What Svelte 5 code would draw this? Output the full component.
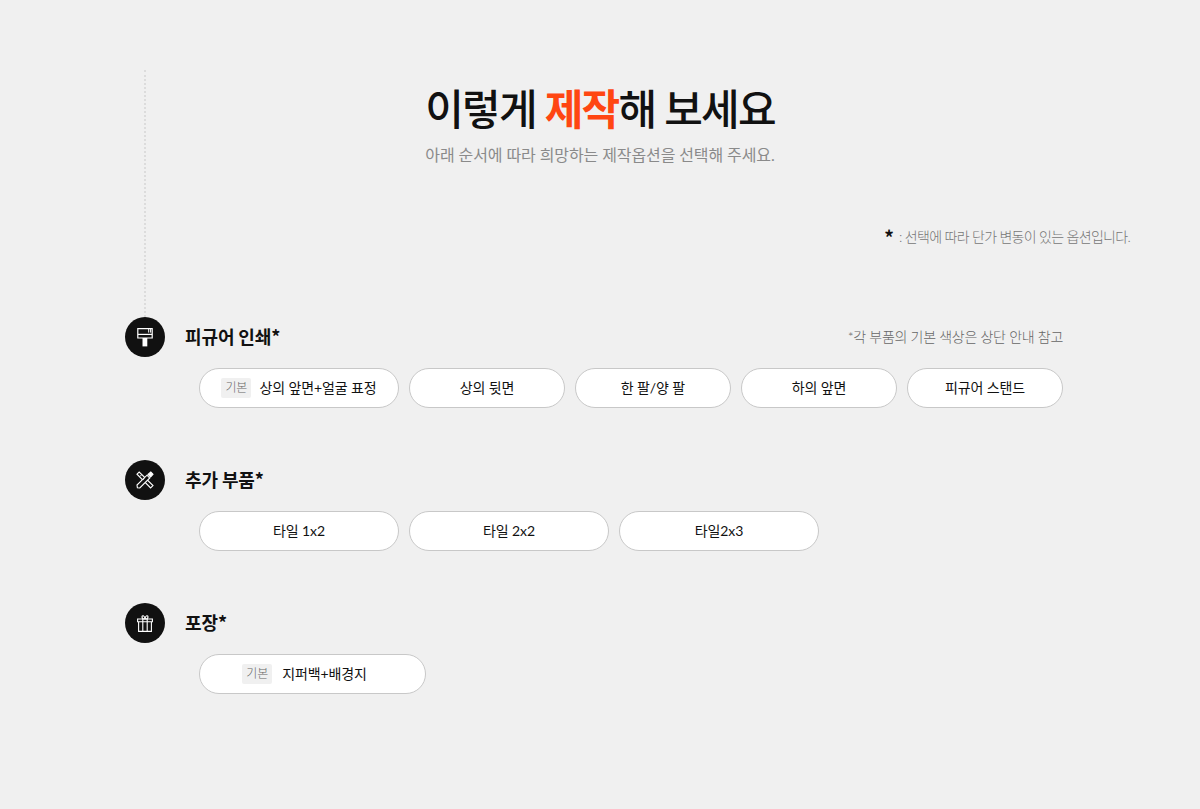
<script>
  const sections = [
    {
      title: "피규어 인쇄*",
      hint: "*각 부품의 기본 색상은 상단 안내 참고",
      icon: "brush",
      options: [
        { label: "상의 앞면+얼굴 표정", base: true, cls: "wide" },
        { label: "상의 뒷면" },
        { label: "한 팔/양 팔" },
        { label: "하의 앞면" },
        { label: "피규어 스탠드" },
      ],
    },
    {
      title: "추가 부품*",
      icon: "tools",
      options: [
        { label: "타일 1x2", cls: "wide" },
        { label: "타일 2x2", cls: "wide" },
        { label: "타일2x3", cls: "wide" },
      ],
    },
    {
      title: "포장*",
      icon: "gift",
      options: [{ label: "지퍼백+배경지", base: true, cls: "widest" }],
    },
  ];
</script>

<div class="page">
  <div class="guide"></div>

  <header class="head">
    <h1>이렇게 <em>제작</em>해 보세요</h1>
    <p class="sub">아래 순서에 따라 희망하는 제작옵션을 선택해 주세요.</p>
  </header>

  <p class="note"><span class="star">*</span><span class="note-text">: 선택에 따라 단가 변동이 있는 옵션입니다.</span></p>

  <div class="sections">
    {#each sections as s}
      <section>
        <div class="sec-head">
          <span class="badge">
            {#if s.icon === "brush"}
              <svg width="16" height="20" viewBox="0 0 16 20" fill="none" stroke="#fff" stroke-width="1.2">
                <path d="M.8 1.600h14.400v9.400H.8z" />
                <path d="M.8 7.400h14.400" />
                <path d="M11.700 2v3.600M13.600 2v3.600" stroke-width="1" />
                <path d="M5.500 11h4.800v8.400H5.500z" fill="#fff" stroke="none" />
              </svg>
            {:else if s.icon === "tools"}
              <svg width="18" height="18" viewBox="0 0 18 18" fill="none" stroke="#fff" stroke-width="1.100">
                <path d="M1 3.200L3.200 1l13.800 13.600-2.400 2.400z" />
                <path d="M1.400 16.800L1 14 11 4.200l2.800 2.800L3.800 17z" fill="#111" />
                <path d="M12 3.400L14.800 1 17 3.200l-2.400 2.800z" fill="#fff" />
                <path d="M3.800 5.600l1.600-1.600M7 8.800l1.200-1.200" stroke-width="1" />
              </svg>
            {:else}
              <svg width="16" height="18" viewBox="0 0 16 18" fill="none" stroke="#fff" stroke-width="1.100">
                <path d="M.6 5h14.800v2.800H.6zM1.600 7.800h12.800v9.600H1.600zM5.800 5v12.400M10.200 5v12.400" />
                <path d="M8 5C6.300 5 5 4.300 5 2.900 5 1.300 7.500.8 8 5zM8 5c1.700 0 3-.7 3-2.100C11 1.300 8.500.8 8 5z" />
              </svg>
            {/if}
          </span>
          <h2>{s.title}</h2>
          {#if s.hint}<span class="hint">{s.hint}</span>{/if}
        </div>
        <div class="options">
          {#each s.options as o}
            <button class={o.cls}>
              {#if o.base}<span class="tag">기본</span>{/if}
              <span class="label">{o.label}</span>
            </button>
          {/each}
        </div>
      </section>
    {/each}
  </div>
</div>

<style>
  :global(body) {
    background: #f0f0f0;
  }

  .page {
    position: relative;
    height: 809px;
    box-sizing: border-box;
    padding-top: 81px;
    overflow: hidden;
    font-family: Lato, "Noto Sans CJK KR", "Noto Sans", sans-serif;
    color: #111;
  }

  .guide {
    position: absolute;
    left: 144px;
    top: 70px;
    height: 247px;
    border-left: 2px dotted #dcdcdc;
  }

  .head {
    text-align: center;
  }

  h1 {
    margin: 0;
    font-size: 42px;
    line-height: 56px;
    font-weight: 500;
    letter-spacing: -1.75px;
  }

  h1 em {
    font-style: normal;
    font-weight: 700;
    color: #ff4612;
  }

  .sub {
    margin: 4px 0 0;
    font-size: 16px;
    line-height: 28px;
    letter-spacing: -0.1px;
    color: #8a8a8a;
  }

  .note {
    margin: 56px 70px 0 0;
    display: flex;
    justify-content: flex-end;
    align-items: center;
    gap: 6px;
    font-size: 14px;
    line-height: 24px;
    font-weight: 300;
    letter-spacing: -0.7px;
    color: #777;
  }

  .star {
    font-family: "Noto Sans CJK KR", sans-serif;
    font-size: 19px;
    line-height: 18px;
    font-weight: 700;
    color: #111;
  }

  .sections {
    margin: 68px 0 0 125px;
    width: 938px;
    display: flex;
    flex-direction: column;
    gap: 52px;
  }

  .sec-head {
    display: flex;
    align-items: center;
    gap: 20px;
    height: 40px;
  }

  .badge {
    width: 40px;
    height: 40px;
    flex: none;
    border-radius: 50%;
    background: #111;
    display: flex;
    align-items: center;
    justify-content: center;
  }

  h2 {
    margin: 0;
    padding-bottom: 3px;
    font-family: "Noto Sans CJK KR", sans-serif;
    font-size: 18px;
    font-weight: 700;
    letter-spacing: -0.1px;
    color: #111;
  }

  .hint {
    margin-left: auto;
    padding-bottom: 3px;
    font-size: 14px;
    font-weight: 300;
    letter-spacing: -0.3px;
    color: #666;
  }

  .options {
    display: flex;
    gap: 10px;
    margin: 11px 0 0 74px;
  }

  button {
    width: 156px;
    height: 40px;
    box-sizing: border-box;
    padding: 0;
    display: flex;
    align-items: center;
    justify-content: center;
    gap: 8px;
    background: #fff;
    border: 1px solid #c8c8c8;
    border-radius: 20px;
    font-family: inherit;
    font-size: 14px;
    font-weight: 400;
    letter-spacing: -0.1px;
    color: #111;
  }

  button.wide {
    width: 200px;
  }

  button.widest {
    width: 227px;
    padding-right: 16px;
    gap: 10px;
  }

  .label {
    padding-bottom: 2px;
  }

  .tag {
    width: 30px;
    height: 20px;
    line-height: 20px;
    text-align: center;
    border-radius: 2px;
    background: #f0f0f0;
    font-size: 12px;
    font-weight: 300;
    color: #666;
  }
</style>
